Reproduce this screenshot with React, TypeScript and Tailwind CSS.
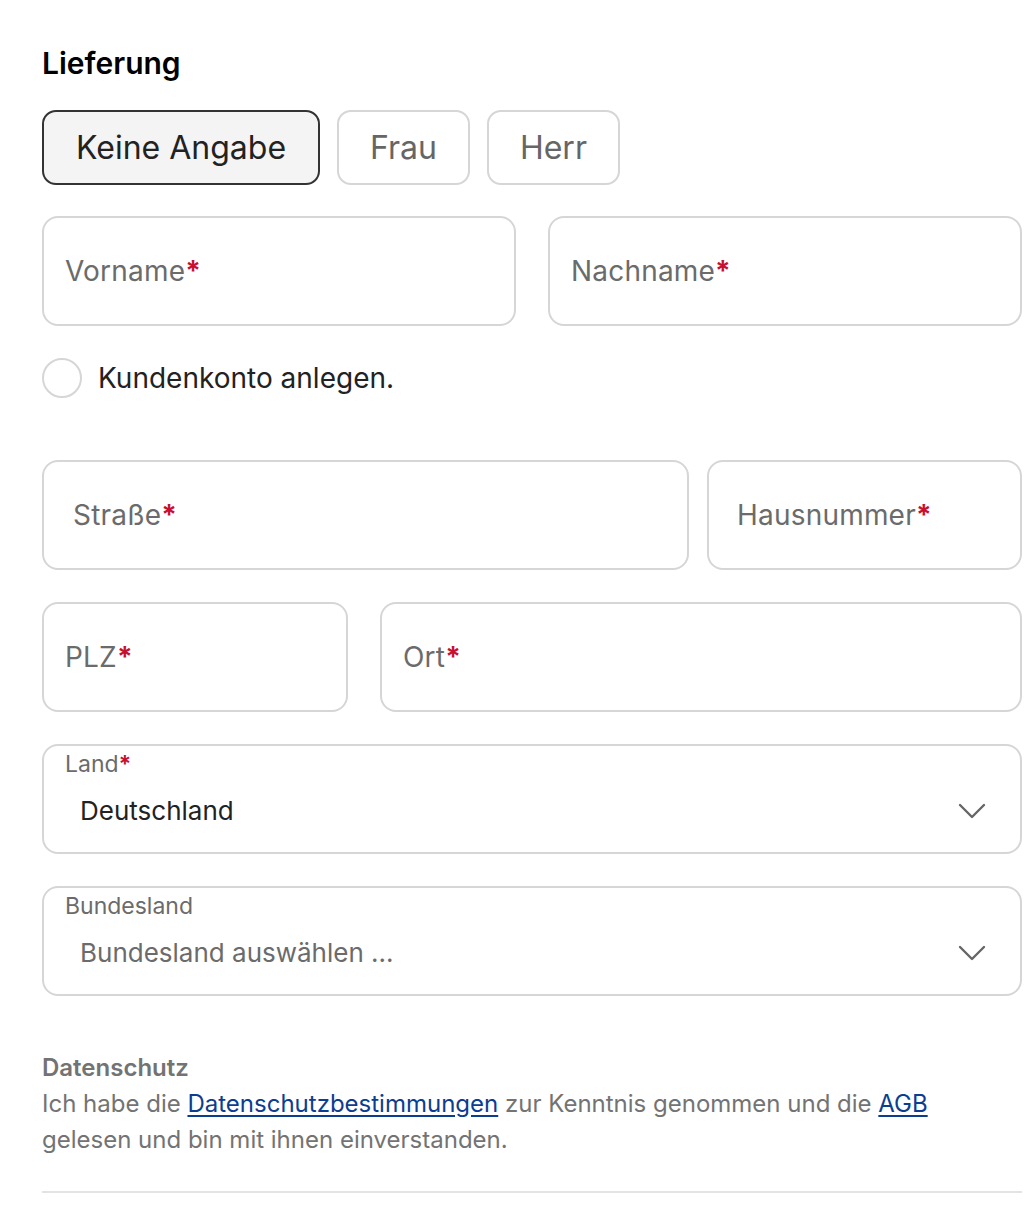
import React, { useState } from 'react';

const Req = () => <span className="text-[#c8102e] font-bold">*</span>;

const Field = ({ label, className = '', pad = 'px-[21px]' }: { label: string; className?: string; pad?: string }) => (
  <div className={`h-[110px] rounded-[16px] border-2 border-[#d6d6d6] bg-white flex items-center ${pad} ${className}`}>
    <span className="text-[28px] text-[#6b6b6b] tracking-[0.2px]">
      {label}
      <Req />
    </span>
  </div>
);

const Chevron = () => (
  <svg width="28" height="16" viewBox="0 0 28 16" fill="none" className="shrink-0">
    <path d="M2 2l12 12L26 2" stroke="#666" strokeWidth="2.4" strokeLinecap="round" strokeLinejoin="round" />
  </svg>
);

const Select = ({ label, required, value, placeholder }: { label: string; required?: boolean; value: string; placeholder?: boolean }) => (
  <div className="h-[110px] rounded-[16px] border-2 border-[#d6d6d6] bg-white flex flex-col pl-[21px] pr-[34px] pt-[3px]">
    <span className="text-[23px] leading-[30px] text-[#6b6b6b]">
      {label}
      {required && <Req />}
    </span>
    <div className="flex items-center justify-between pl-[15px] mt-[14px]">
      <span className={`text-[26px] leading-[36px] ${placeholder ? 'text-[#6b6b6b]' : 'text-[#222]'}`}>{value}</span>
      <Chevron />
    </div>
  </div>
);

export default function App() {
  const [salutation, setSalutation] = useState('Keine Angabe');
  const options = ['Keine Angabe', 'Frau', 'Herr'];

  return (
    <div className="min-h-screen bg-white pl-[42px] pr-[14px] pt-[44px]" style={{ fontFamily: "Inter, 'Noto Sans', sans-serif" }}>
      <h2 className="text-[30px] leading-[38px] font-semibold text-black">Lieferung</h2>

      <div className="flex gap-[17px] mt-[28px]">
        {options.map((o) => (
          <button
            key={o}
            onClick={() => setSalutation(o)}
            className={`h-[75px] rounded-[14px] border-2 text-[32px] ${
              salutation === o
                ? 'px-[32px] border-[#333] bg-[#f4f4f4] text-[#222]'
                : 'px-[31px] border-[#d6d6d6] bg-white text-[#666]'
            }`}
          >
            {o}
          </button>
        ))}
      </div>

      <div className="grid grid-cols-2 gap-[32px] mt-[31px]">
        <Field label="Vorname" />
        <Field label="Nachname" />
      </div>

      <label className="flex items-center gap-[16px] mt-[32px] h-[40px]">
        <span className="w-[40px] h-[40px] rounded-full border-2 border-[#d6d6d6] bg-white shrink-0" />
        <span className="text-[28px] text-[#222]">Kundenkonto anlegen.</span>
      </label>

      <div className="flex gap-[18px] mt-[62px]">
        <Field label="Straße" className="w-[647px]" pad="px-[29px]" />
        <Field label="Hausnummer" className="flex-1" pad="px-[28px]" />
      </div>

      <div className="flex gap-[32px] mt-[32px]">
        <Field label="PLZ" className="w-[306px]" />
        <Field label="Ort" className="flex-1" />
      </div>

      <div className="mt-[32px] flex flex-col gap-[32px]">
        <Select label="Land" required value="Deutschland" />
        <Select label="Bundesland" value="Bundesland auswählen ..." placeholder />
      </div>

      <div className="mt-[54px] text-[24px] leading-[36px] text-[#737373]">
        <div className="font-semibold">Datenschutz</div>
        <p>
          Ich habe die{' '}
          <a href="#" className="text-[#0b3d91] underline underline-offset-[3px]">Datenschutzbestimmungen</a>{' '}
          zur Kenntnis genommen und die{' '}
          <a href="#" className="text-[#0b3d91] underline underline-offset-[3px]">AGB</a>
          <br />
          gelesen und bin mit ihnen einverstanden.
        </p>
      </div>

      <div className="mt-[33px] h-[2px] bg-[#e3e3e3]" />
    </div>
  );
}
